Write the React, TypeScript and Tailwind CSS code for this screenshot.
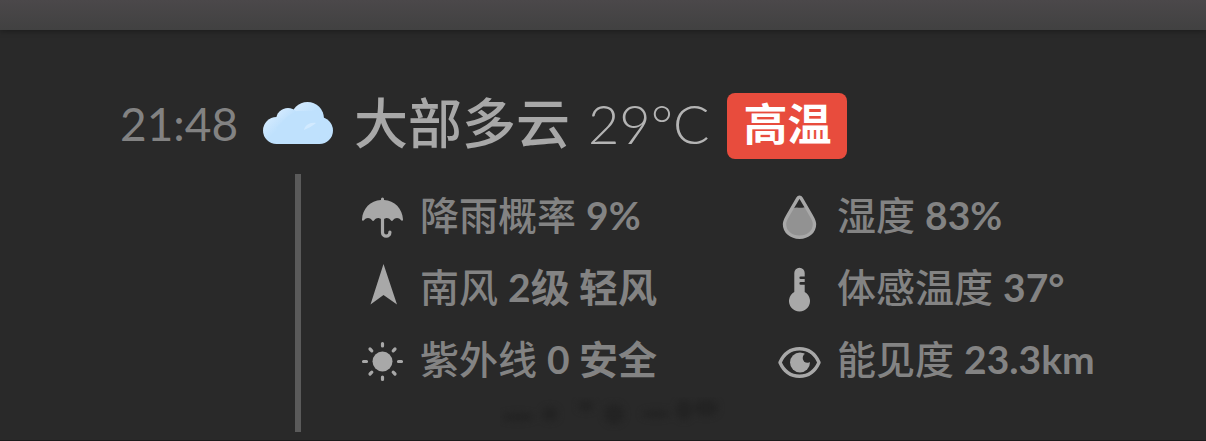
import React from 'react';

interface WeatherDetail {
  label: string;
  value: string;
  icon: React.ReactNode;
}

const CloudIcon: React.FC = () => (
  <svg className="h-[42px] w-[70px]" viewBox="0 0 70 42" aria-hidden="true">
    <defs>
      <linearGradient id="puff" x1="0" y1="0" x2="1" y2="1">
        <stop offset="0" stopColor="#d9edff" />
        <stop offset="0.5" stopColor="#bfe1fd" />
      </linearGradient>
    </defs>
    <circle cx="44.5" cy="16.5" r="16.5" fill="url(#puff)" />
    <circle cx="25" cy="18" r="12" fill="url(#puff)" />
    <circle cx="13.5" cy="28.5" r="13.5" fill="url(#puff)" />
    <circle cx="56.5" cy="28.5" r="13.5" fill="#bfe1fd" />
    <path d="M13.5 42V26L24 15l10-6h20l4 12-1.500 21z" fill="#bfe1fd" />
    <path d="M41 28c1-5 6-8 12-7-3 3-8 5-12 7z" fill="#d2eaff" />
  </svg>
);

const UmbrellaIcon: React.FC = () => (
  <svg className="h-[50px] w-11 shrink-0" viewBox="0 0 44 50" aria-hidden="true">
    <path
      d="M21 8V7a1.500 1.500 0 0 1 3 0v1C34.500 8.600 42.500 16.500 43 27.500c0 1.300-1.200 1.700-2 .8-2.200-3-5.800-3-8 0-.6.800-1.600.8-2.200 0-1.700-2.400-4.300-2.900-6.300-1.600h-4c-2-1.300-4.600-.8-6.300 1.600-.6.800-1.600.8-2.200 0-2.200-3-5.800-3-8 0-.8.900-2 .5-2-.8C2.500 16.500 10.500 8.600 21 8z"
      fill="#a8a8a8"
    />
    <path d="M22.500 24v16.500a3.700 3.700 0 0 0 7.400 0v-.5" fill="none" stroke="#a8a8a8" strokeWidth="3.2" strokeLinecap="round" />
  </svg>
);

const WindIcon: React.FC = () => (
  <svg className="h-[50px] w-11 shrink-0" viewBox="0 0 44 50" aria-hidden="true">
    <path d="M23.500 0L37 40.500 23.500 31 10.500 40.500z" fill="#a8a8a8" />
  </svg>
);

const SunIcon: React.FC = () => (
  <svg className="h-[50px] w-11 shrink-0" viewBox="0 0 44 50" aria-hidden="true">
    <circle cx="22.5" cy="25.5" r="10" fill="#a8a8a8" />
    <path
      d="M22.500 7.500v2.500M22.500 41v2.500M3.500 25.500h3M38.500 25.500h3M10 13l1.800 1.800M33.200 36.200l1.800 1.800M10 38l1.800-1.800M33.200 14.800L35 13"
      stroke="#a8a8a8"
      strokeWidth="3.2"
      strokeLinecap="round"
    />
  </svg>
);

const DropIcon: React.FC = () => (
  <svg className="h-[50px] w-11 shrink-0" viewBox="0 0 44 50" aria-hidden="true">
    <path d="M16 16.500c4-2.500 8 1 13-2l6 11c5 10-2 19.500-12.500 19.500S5 37 9 27z" fill="#929292" />
    <path
      d="M20.800 6.300c.8-1.400 2.600-1.400 3.400 0l10 17.200c2.200 3.800 3.300 5.700 3.300 8.500 0 7.800-6.500 13.300-15 13.300S7.500 39.800 7.500 32c0-2.800 1.100-4.700 3.300-8.500z"
      fill="none"
      stroke="#a8a8a8"
      strokeWidth="3.4"
    />
  </svg>
);

const ThermometerIcon: React.FC = () => (
  <svg className="h-[50px] w-11 shrink-0" viewBox="0 0 44 50" aria-hidden="true">
    <path
      d="M17.300 9a5.200 5.200 0 0 1 10.400 0v3.500h-4a1.300 1.300 0 0 0 0 2.600h4v3h-4a1.300 1.300 0 0 0 0 2.600h4v7.200a10.500 10.500 0 1 1-10.400 0z"
      fill="#a8a8a8"
    />
  </svg>
);

const EyeIcon: React.FC = () => (
  <svg className="h-[50px] w-11 shrink-0" viewBox="0 0 44 50" aria-hidden="true">
    <path
      d="M3 26.500C7 17.500 14 12.800 22.500 12.800S38 17.500 42 26.500c-4 9-11 13.700-19.500 13.700S7 35.500 3 26.500z"
      fill="none"
      stroke="#a8a8a8"
      strokeWidth="3.4"
      strokeLinejoin="round"
    />
    <circle cx="23" cy="26.5" r="10" fill="#a8a8a8" />
    <circle cx="30.5" cy="22" r="4.800" fill="#292929" />
  </svg>
);

const details: WeatherDetail[] = [
  { label: '降雨概率', value: '9%', icon: <UmbrellaIcon /> },
  { label: '湿度', value: '83%', icon: <DropIcon /> },
  { label: '南风', value: '2级 轻风', icon: <WindIcon /> },
  { label: '体感温度', value: '37°', icon: <ThermometerIcon /> },
  { label: '紫外线', value: '0 安全', icon: <SunIcon /> },
  { label: '能见度', value: '23.3km', icon: <EyeIcon /> },
];

// Faint worn marks under the list
const Smudge: React.FC = () => (
  <svg className="ml-[140px] h-[35px] w-[230px]" viewBox="0 0 230 35" aria-hidden="true">
    <g fill="#232323" className="blur-[3px]">
      <ellipse cx="18" cy="20" rx="16" ry="4" />
      <ellipse cx="50" cy="17" rx="8" ry="7" />
      <ellipse cx="86" cy="9" rx="8" ry="5" />
      <ellipse cx="114" cy="17" rx="10" ry="10" />
      <ellipse cx="156" cy="17" rx="14" ry="4" />
      <ellipse cx="184" cy="13" rx="8" ry="10" />
      <ellipse cx="206" cy="11" rx="12" ry="8" />
    </g>
  </svg>
);

const DetailItem: React.FC<WeatherDetail> = ({ label, value, icon }) => (
  <li className="flex h-[72px] items-center gap-4">
    {icon}
    <div className="flex items-center gap-2.5 whitespace-nowrap pb-1 text-[39px] leading-[48px] text-[#838383]">
      <span className="font-medium">{label}</span>
      <span className="font-bold">{value}</span>
    </div>
  </li>
);

export default function App() {
  return (
    <div className="flex min-h-screen flex-col border-b border-[#1c1c1c] bg-[#292929] font-['Lato','Noto_Sans_CJK_SC',sans-serif]">
      <div className="h-[30px] bg-linear-to-b from-[#4b484a] to-[#414141] shadow-[0_1px_6px_rgba(0,0,0,0.35)]" />

      <main className="grid grid-cols-[143px_70px_1fr] gap-y-[15px] pt-[63px] pl-[120px]">
        <time className="flex h-[60px] items-center text-[46px] text-[#828282]">21:48</time>
        <div className="flex h-[60px] items-center">
          <CloudIcon />
        </div>
        <div className="flex items-start gap-[18px] whitespace-nowrap pl-[21px] text-[54px] leading-[62px] text-[#a8a8a8]">
          <h1 className="font-medium">大部多云</h1>
          <span className="font-light text-[#b4b4b4]">29°C</span>
          <span className="rounded-lg bg-[#e84c3d] px-4 pb-1 text-[44px] font-bold text-white">高温</span>
        </div>

        <div className="col-start-2 flex justify-center">
          <div className="w-[6px] bg-[#5a5a5a]" />
        </div>
        <div className="pt-[7px] pl-[27px]">
          <ul className="grid grid-cols-[417px_1fr]">
            {details.map((detail) => (
              <DetailItem key={detail.label} {...detail} />
            ))}
          </ul>
          <Smudge />
        </div>
      </main>
    </div>
  );
}
